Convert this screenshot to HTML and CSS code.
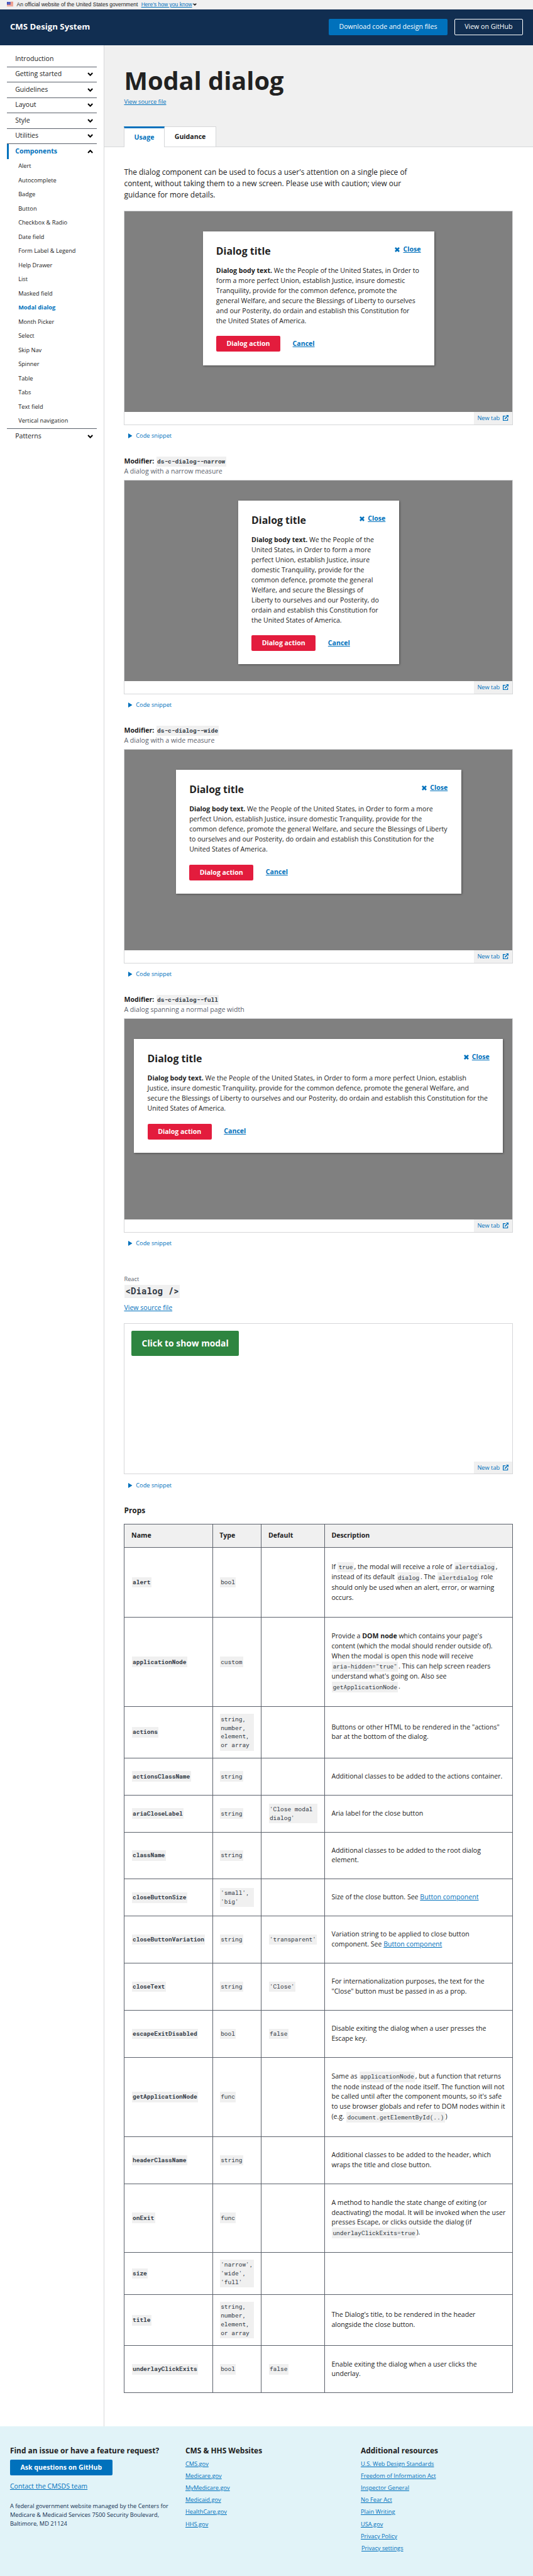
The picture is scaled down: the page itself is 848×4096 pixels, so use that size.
FILE: index.html
```html
<!DOCTYPE html>
<html lang="en">
<head>
<meta charset="utf-8">
<title>Modal dialog - CMS Design System</title>
<link rel="stylesheet" href="styles.css">
</head>
<body>
<svg class="defs" width="0" height="0">
  <symbol id="down" viewBox="0 0 14 9"><path d="M1.6 1.6 7 7l5.4-5.4" fill="none" stroke="#000" stroke-width="3.2"/></symbol>
  <symbol id="up" viewBox="0 0 14 9"><path d="M1.6 7.4 7 2l5.4 5.4" fill="none" stroke="#000" stroke-width="3.2"/></symbol>
  <symbol id="x" viewBox="0 0 12 12"><path d="M1.4 1.4l9.2 9.2M10.6 1.4l-9.2 9.2" fill="none" stroke="#0071bc" stroke-width="4"/></symbol>
  <symbol id="tri" viewBox="0 0 10 12"><path d="M0 0l10 6L0 12z" fill="#0071bc"/></symbol>
  <symbol id="ext" viewBox="0 0 14 14"><path d="M6.5 2.5H1v10.5h10.5V8" fill="none" stroke="#0071bc" stroke-width="2"/><path d="M5 9.2 10.5 3.5" stroke="#0071bc" stroke-width="2.4"/><path d="M7.6 0H14v6.4z" fill="#0071bc"/></symbol>
</svg>
<div class="banner">
  <svg class="flag" viewBox="0 0 16 11"><path fill="#fff" d="M0 0h16v11H0z"/><path d="M0 .8h16M0 4h16M0 7.2h16M0 10.4h16" stroke="#db3e1f" stroke-width="1.5"/><path fill="#1e33b1" d="M0 0h8.5v6.4H0z"/><path d="M1 1.5h7M2 3.2h6M1 4.9h7" stroke="#fff" stroke-width=".9" stroke-dasharray="1 1"/></svg>
  <span>An official website of the United States government</span>
  <a class="how">Here’s how you know</a><svg class="how-caret"><use href="#down"/></svg>
</div>
<header class="top">
  <div class="brand">CMS Design System</div>
  <a class="btn btn-primary">Download code and design files</a>
  <a class="btn btn-outline">View on GitHub</a>
</header>
<div class="layout">
  <nav class="side">
    <div class="nav-item">Introduction</div>
    <div class="nav-item">Getting started<svg class="caret"><use href="#down"/></svg></div>
    <div class="nav-item">Guidelines<svg class="caret"><use href="#down"/></svg></div>
    <div class="nav-item">Layout<svg class="caret"><use href="#down"/></svg></div>
    <div class="nav-item">Style<svg class="caret"><use href="#down"/></svg></div>
    <div class="nav-item">Utilities<svg class="caret"><use href="#down"/></svg></div>
    <div class="nav-item nav-open">Components<svg class="caret"><use href="#up"/></svg></div>
    <ul class="sub">
      <li>Alert</li><li>Autocomplete</li><li>Badge</li><li>Button</li><li>Checkbox &amp; Radio</li><li>Date field</li><li>Form Label &amp; Legend</li><li>Help Drawer</li><li>List</li><li>Masked field</li><li class="current">Modal dialog</li><li>Month Picker</li><li>Select</li><li>Skip Nav</li><li>Spinner</li><li>Table</li><li>Tabs</li><li>Text field</li><li>Vertical navigation</li>
    </ul>
    <div class="nav-item nav-last">Patterns<svg class="caret"><use href="#down"/></svg></div>
  </nav>
  <main class="main">
    <div class="page-head">
      <h1>Modal dialog</h1>
      <a class="link small">View source file</a>
      <div class="tabs"><div class="tab tab-on">Usage</div><div class="tab">Guidance</div></div>
    </div>
    <div class="content">
      <p class="lead">The dialog component can be used to focus a user's attention on a single piece of content, without taking them to a new screen. Please use with caution; view our guidance for more details.</p>

      <section class="example">
        <div class="frame">
          <div class="stage"><div class="dialog">
            <div class="dialog-head"><h2>Dialog title</h2><a class="close"><svg><use href="#x"/></svg><span>Close</span></a></div>
            <p><b>Dialog body text.</b> We the People of the United States, in Order to form a more perfect Union, establish Justice, insure domestic Tranquility, provide for the common defence, promote the general Welfare, and secure the Blessings of Liberty to ourselves and our Posterity, do ordain and establish this Constitution for the United States of America.</p>
            <div class="actions"><a class="btn btn-danger">Dialog action</a><a class="cancel">Cancel</a></div>
          </div></div>
          <div class="frame-foot"><a class="newtab">New tab<svg><use href="#ext"/></svg></a></div>
        </div>
        <div class="snippet"><svg><use href="#tri"/></svg>Code snippet</div>
      </section>

      <section class="example">
        <div class="label"><b>Modifier:</b> <code>ds-c-dialog--narrow</code></div>
        <div class="desc">A dialog with a narrow measure</div>
        <div class="frame">
          <div class="stage"><div class="dialog narrow">
            <div class="dialog-head"><h2>Dialog title</h2><a class="close"><svg><use href="#x"/></svg><span>Close</span></a></div>
            <p><b>Dialog body text.</b> We the People of the United States, in Order to form a more perfect Union, establish Justice, insure domestic Tranquility, provide for the common defence, promote the general Welfare, and secure the Blessings of Liberty to ourselves and our Posterity, do ordain and establish this Constitution for the United States of America.</p>
            <div class="actions"><a class="btn btn-danger">Dialog action</a><a class="cancel">Cancel</a></div>
          </div></div>
          <div class="frame-foot"><a class="newtab">New tab<svg><use href="#ext"/></svg></a></div>
        </div>
        <div class="snippet"><svg><use href="#tri"/></svg>Code snippet</div>
      </section>

      <section class="example">
        <div class="label"><b>Modifier:</b> <code>ds-c-dialog--wide</code></div>
        <div class="desc">A dialog with a wide measure</div>
        <div class="frame">
          <div class="stage"><div class="dialog wide">
            <div class="dialog-head"><h2>Dialog title</h2><a class="close"><svg><use href="#x"/></svg><span>Close</span></a></div>
            <p><b>Dialog body text.</b> We the People of the United States, in Order to form a more perfect Union, establish Justice, insure domestic Tranquility, provide for the common defence, promote the general Welfare, and secure the Blessings of Liberty to ourselves and our Posterity, do ordain and establish this Constitution for the United States of America.</p>
            <div class="actions"><a class="btn btn-danger">Dialog action</a><a class="cancel">Cancel</a></div>
          </div></div>
          <div class="frame-foot"><a class="newtab">New tab<svg><use href="#ext"/></svg></a></div>
        </div>
        <div class="snippet"><svg><use href="#tri"/></svg>Code snippet</div>
      </section>

      <section class="example">
        <div class="label"><b>Modifier:</b> <code>ds-c-dialog--full</code></div>
        <div class="desc">A dialog spanning a normal page width</div>
        <div class="frame">
          <div class="stage"><div class="dialog full">
            <div class="dialog-head"><h2>Dialog title</h2><a class="close"><svg><use href="#x"/></svg><span>Close</span></a></div>
            <p><b>Dialog body text.</b> We the People of the United States, in Order to form a more perfect Union, establish Justice, insure domestic Tranquility, provide for the common defence, promote the general Welfare, and secure the Blessings of Liberty to ourselves and our Posterity, do ordain and establish this Constitution for the United States of America.</p>
            <div class="actions"><a class="btn btn-danger">Dialog action</a><a class="cancel">Cancel</a></div>
          </div></div>
          <div class="frame-foot"><a class="newtab">New tab<svg><use href="#ext"/></svg></a></div>
        </div>
        <div class="snippet"><svg><use href="#tri"/></svg>Code snippet</div>
      </section>

      <section class="react">
        <div class="kicker">React</div>
        <h2 class="react-name"><code>&lt;Dialog /&gt;</code></h2>
        <a class="link react-src">View source file</a>
        <div class="frame react-frame">
          <div class="react-stage"><a class="btn btn-show">Click to show modal</a></div>
          <div class="frame-foot"><a class="newtab">New tab<svg><use href="#ext"/></svg></a></div>
        </div>
        <div class="snippet"><svg><use href="#tri"/></svg>Code snippet</div>
        <h3>Props</h3>
        <table class="props">
          <colgroup><col class="c1"><col class="c2"><col class="c3"><col class="c4"></colgroup>
          <tr class="head"><th>Name</th><th>Type</th><th>Default</th><th>Description</th></tr>
          <tr class="h167"><td><code>alert</code></td><td><code>bool</code></td><td></td><td>If <code>true</code>, the modal will receive a role of <code>alertdialog</code>, instead of its default <code>dialog</code>. The <code>alertdialog</code> role should only be used when an alert, error, or warning occurs.</td></tr>
          <tr class="h215"><td><code>applicationNode</code></td><td><code>custom</code></td><td></td><td>Provide a <b>DOM node</b> which contains your page's content (which the modal should render outside of). When the modal is open this node will receive <code>aria-hidden="true"</code>. This can help screen readers understand what's going on. Also see <code>getApplicationNode</code>.</td></tr>
          <tr class="h123"><td><code>actions</code></td><td><code>string, number, element, or array</code></td><td></td><td>Buttons or other HTML to be rendered in the "actions" bar at the bottom of the dialog.</td></tr>
          <tr class="h89"><td><code>actionsClassName</code></td><td><code>string</code></td><td></td><td>Additional classes to be added to the actions container.</td></tr>
          <tr class="h89"><td><code>ariaCloseLabel</code></td><td><code>string</code></td><td><code>'Close modal dialog'</code></td><td>Aria label for the close button</td></tr>
          <tr class="h113"><td><code>className</code></td><td><code>string</code></td><td></td><td>Additional classes to be added to the root dialog element.</td></tr>
          <tr class="h89"><td><code>closeButtonSize</code></td><td><code>'small', 'big'</code></td><td></td><td>Size of the close button. See <a class="link">Button component</a></td></tr>
          <tr class="h113"><td><code>closeButtonVariation</code></td><td><code>string</code></td><td><code>'transparent'</code></td><td>Variation string to be applied to close button component. See <a class="link">Button component</a></td></tr>
          <tr class="h113"><td><code>closeText</code></td><td><code>string</code></td><td><code>'Close'</code></td><td>For internationalization purposes, the text for the "Close" button must be passed in as a prop.</td></tr>
          <tr class="h113"><td><code>escapeExitDisabled</code></td><td><code>bool</code></td><td><code>false</code></td><td>Disable exiting the dialog when a user presses the Escape key.</td></tr>
          <tr class="h191"><td><code>getApplicationNode</code></td><td><code>func</code></td><td></td><td>Same as <code>applicationNode</code>, but a function that returns the node instead of the node itself. The function will not be called until after the component mounts, so it's safe to use browser globals and refer to DOM nodes within it (e.g. <code>document.getElementById(..)</code>)</td></tr>
          <tr class="h113"><td><code>headerClassName</code></td><td><code>string</code></td><td></td><td>Additional classes to be added to the header, which wraps the title and close button.</td></tr>
          <tr class="h164"><td><code>onExit</code></td><td><code>func</code></td><td></td><td>A method to handle the state change of exiting (or deactivating) the modal. It will be invoked when the user presses Escape, or clicks outside the dialog (if <code>underlayClickExits=true</code>).</td></tr>
          <tr class="h102"><td><code>size</code></td><td><code>'narrow', 'wide', 'full'</code></td><td></td><td></td></tr>
          <tr class="h123"><td><code>title</code></td><td><code>string, number, element, or array</code></td><td></td><td>The Dialog's title, to be rendered in the header alongside the close button.</td></tr>
          <tr class="h113"><td><code>underlayClickExits</code></td><td><code>bool</code></td><td><code>false</code></td><td>Enable exiting the dialog when a user clicks the underlay.</td></tr>
        </table>
      </section>
    </div>
  </main>
</div>
<footer class="footer">
  <div class="fcol fcol-a">
    <h4>Find an issue or have a feature request?</h4>
    <a class="btn btn-primary btn-ask">Ask questions on GitHub</a>
    <a class="link contact">Contact the CMSDS team</a>
    <p>A federal government website managed by the Centers for Medicare &amp; Medicaid Services 7500 Security Boulevard, Baltimore, MD 21124</p>
  </div>
  <div class="fcol">
    <h4>CMS &amp; HHS Websites</h4>
    <ul><li>CMS.gov</li><li>Medicare.gov</li><li>MyMedicare.gov</li><li>Medicaid.gov</li><li>HealthCare.gov</li><li>HHS.gov</li></ul>
  </div>
  <div class="fcol">
    <h4>Additional resources</h4>
    <ul><li>U.S. Web Design Standards</li><li>Freedom of Information Act</li><li>Inspector General</li><li>No Fear Act</li><li>Plain Writing</li><li>USA.gov</li><li>Privacy Policy</li><li class="settings">Privacy settings</li></ul>
  </div>
</footer>
</body>
</html>
```
FILE: styles.css
```css
/* 1rem = ten units of the 1280-unit wide layout grid */
html { font-size: 6.6214px; }
* { box-sizing: border-box; }
body {
  margin: 0;
  height: 4096px;
  overflow: hidden;
  display: flex;
  flex-direction: column;
  background: #fff;
  color: #212121;
  font: 1.6rem/2.4rem "Open Sans", sans-serif;
}
h1, h2, h3, h4, p, ul { margin: 0; padding: 0; list-style: none; }
svg { flex: none; display: block; }
.defs { position: absolute; }
.link { color: #0071bc; text-decoration: underline; }

.banner {
  flex: none;
  height: 2.2rem;
  padding-left: 1.6rem;
  display: flex;
  align-items: center;
  background: #f0f0f0;
  font: 1.29rem/2rem "Liberation Sans", sans-serif;
  white-space: nowrap;
}
.flag { width: 1.6rem; height: 1.1rem; margin: 0 .8rem .2rem 0; }
.how { margin-left: .8rem; color: #0071bc; text-decoration: underline; }
.how-caret { width: .9rem; height: .6rem; margin-left: .2rem; }

.top {
  flex: none;
  height: 8.6rem;
  padding: 0 2.4rem;
  display: flex;
  align-items: center;
  gap: 1.6rem;
  background: #112e51;
}
.brand { margin-right: auto; color: #fff; font-size: 2rem; font-weight: 700; }
.btn {
  height: 3.8rem;
  padding: 0 2.5rem;
  border-radius: 2px;
  color: #fff;
  line-height: 3.8rem;
  white-space: nowrap;
}
.btn-primary { background: #0071bc; }
.btn-outline { border: 1px solid #fff; padding: 0 2.35rem; line-height: 3.5rem; }

.layout { flex: none; height: 571.8rem; display: flex; }
.side {
  flex: none;
  width: 25rem;
  padding: 1.6rem 1.6rem 0;
  border-right: 1px solid #d6d7d9;
}
.nav-item {
  height: 3.7rem;
  padding: 0 .8rem 0 2.05rem;
  display: flex;
  align-items: center;
  justify-content: space-between;
  border-bottom: 1px solid #5b616b;
}
.nav-open {
  padding-left: 1.6rem;
  border-bottom: 0;
  border-left: 3px solid #0071bc;
  color: #0071bc;
  font-weight: 700;
}
.caret { width: 1.4rem; height: .9rem; }
.sub { height: 64.55rem; font-size: 1.4rem; line-height: 3.4rem; }
.sub li { height: 3.4rem; padding-left: 2.8rem; }
.current { color: #0071bc; font-weight: 700; }
.nav-last { border-bottom: 0; border-top: 1px solid #5b616b; }

.main { flex: 1; min-width: 0; }
.page-head {
  height: 24.5rem;
  padding: 4.7rem 0 0 4.82rem;
  display: flex;
  flex-direction: column;
  background: #f0f0f0;
  border-bottom: 1px solid #d6d7d9;
}
h1 { font-size: 6rem; line-height: 7.8rem; }
.small { margin-top: .1rem; font-size: 1.4rem; line-height: 2.1rem; }
.tabs { display: flex; height: 4.95rem; margin: auto 0 -1px; }
.tab {
  width: 12.5rem;
  height: 4.95rem;
  border: 1px solid #d6d7d9;
  border-left: 0;
  background: #fff;
  text-align: center;
  font-weight: 700;
  line-height: 4.8rem;
}
.tab-on {
  width: 9.7rem;
  border-left: 1px solid #d6d7d9;
  border-top: 3px solid #0071bc;
  border-bottom: 0;
  color: #0071bc;
  line-height: 4.3rem;
}
.content { padding: 4.75rem 0 0 4.82rem; }
.lead { max-width: 70.5rem; height: 10.6rem; font-size: 1.8rem; line-height: 2.7rem; }

.example { width: 93.42rem; margin-bottom: 3.75rem; }
.label { height: 2.55rem; line-height: 2.5rem; white-space: nowrap; }
.desc { height: 3.25rem; color: #5b616b; line-height: 2.4rem; }
code {
  display: inline-block;
  margin: 0 .1rem;
  padding: .2rem;
  background: #f0f0f0;
  color: #323a45;
  font: 1.435rem/2.1rem "Roboto Mono", "Liberation Mono", monospace;
}
.label code { font-weight: 700; }
.frame {
  height: 51.4rem;
  display: flex;
  flex-direction: column;
  border: 1px solid #d6d7d9;
}
.stage { flex: 1; padding-top: 4.8rem; background: #808080; }
.dialog {
  width: 55.6rem;
  margin: 0 auto;
  padding: 3.2rem;
  background: #fff;
  box-shadow: 1px 1px 3px rgba(0, 0, 0, .4);
}
.narrow { width: 38.6rem; }
.wide { width: 68.5rem; }
.full { width: 88.6rem; }
.dialog-head { display: flex; justify-content: space-between; height: 5.14rem; }
.dialog-head h2 { font-size: 2.4rem; line-height: 3.3rem; }
.close {
  display: flex;
  height: 2.4rem;
  align-items: center;
  gap: .8rem;
  color: #0071bc;
  font-weight: 700;
}
.close svg { width: 1.2rem; height: 1.2rem; }
.close span, .cancel { text-decoration: underline; }
.actions { display: flex; align-items: center; margin-top: 2.36rem; }
.btn-danger { background: #e31c3d; font-weight: 700; }
.cancel { margin-left: 2.95rem; color: #0071bc; font-weight: 700; }
.frame-foot { flex: none; height: 3rem; display: flex; justify-content: flex-end; }
.newtab {
  width: 9.2rem;
  padding: 0 .8rem;
  display: flex;
  align-items: center;
  justify-content: space-between;
  background: #f0f0f0;
  color: #0071bc;
  font-size: 1.4rem;
}
.newtab svg { width: 1.4rem; height: 1.4rem; }
.snippet {
  margin-top: 1.6rem;
  padding-left: 1rem;
  display: flex;
  align-items: center;
  gap: .85rem;
  color: #0071bc;
  font-size: 1.4rem;
  line-height: 2.1rem;
}
.snippet svg { width: 1rem; height: 1.2rem; }

.react { width: 93.42rem; padding-top: 2.75rem; }
.kicker { height: 2.25rem; color: #5b616b; font-size: 1.4rem; line-height: 2.1rem; }
.react-name { height: 4.5rem; line-height: 3.2rem; }
.react-name code { font-size: 2.15rem; font-weight: 700; line-height: 2.8rem; }
.react-src { display: block; height: 4.85rem; }
.react-frame { height: 36.3rem; }
.react-stage { flex: 1; padding: 1.6rem; }
.btn-show {
  display: inline-block;
  height: 6.1rem;
  background: #2e8540;
  font-size: 2.09rem;
  font-weight: 700;
  line-height: 6.1rem;
}
h3 { margin: 3.6rem 0 1.8rem; font-size: 1.8rem; line-height: 2.7rem; }

.props { width: 93.42rem; table-layout: fixed; border-collapse: collapse; }
.c1 { width: 21.17rem; }
.c2 { width: 11.74rem; }
.c3 { width: 15.18rem; }
th, td { padding: 0 1.6rem; border: 1px solid #5b616b; text-align: left; vertical-align: middle; }
th { background: #f0f0f0; }
td:first-child code { font-weight: 700; }
.head { height: 5.7rem; }
.h89 { height: 8.9rem; }
.h102 { height: 10.2rem; }
.h113 { height: 11.3rem; }
.h123 { height: 12.3rem; }
.h164 { height: 16.4rem; }
.h167 { height: 16.7rem; }
.h191 { height: 19.1rem; }
.h215 { height: 21.5rem; }

.footer {
  flex: none;
  height: 36rem;
  padding: 4.6rem 2.4rem 0;
  display: grid;
  grid-template-columns: 38.2rem 38.2rem 1fr;
  gap: 3.95rem;
  background: #e1f3f8;
}
.fcol h4 { height: 3.4rem; font-size: 1.8rem; line-height: 2.7rem; white-space: nowrap; }
.fcol-a { display: flex; flex-direction: column; align-items: flex-start; }
.btn-ask { font-weight: 700; }
.contact { margin-top: 1.6rem; }
.fcol p { margin-top: 2.45rem; color: #112e51; font-size: 1.4rem; line-height: 2.1rem; }
.fcol li {
  height: 2.9rem;
  color: #0071bc;
  font-size: 1.4rem;
  line-height: 2.1rem;
  text-decoration: underline;
}
.fcol .settings { padding-left: .15rem; }
```
